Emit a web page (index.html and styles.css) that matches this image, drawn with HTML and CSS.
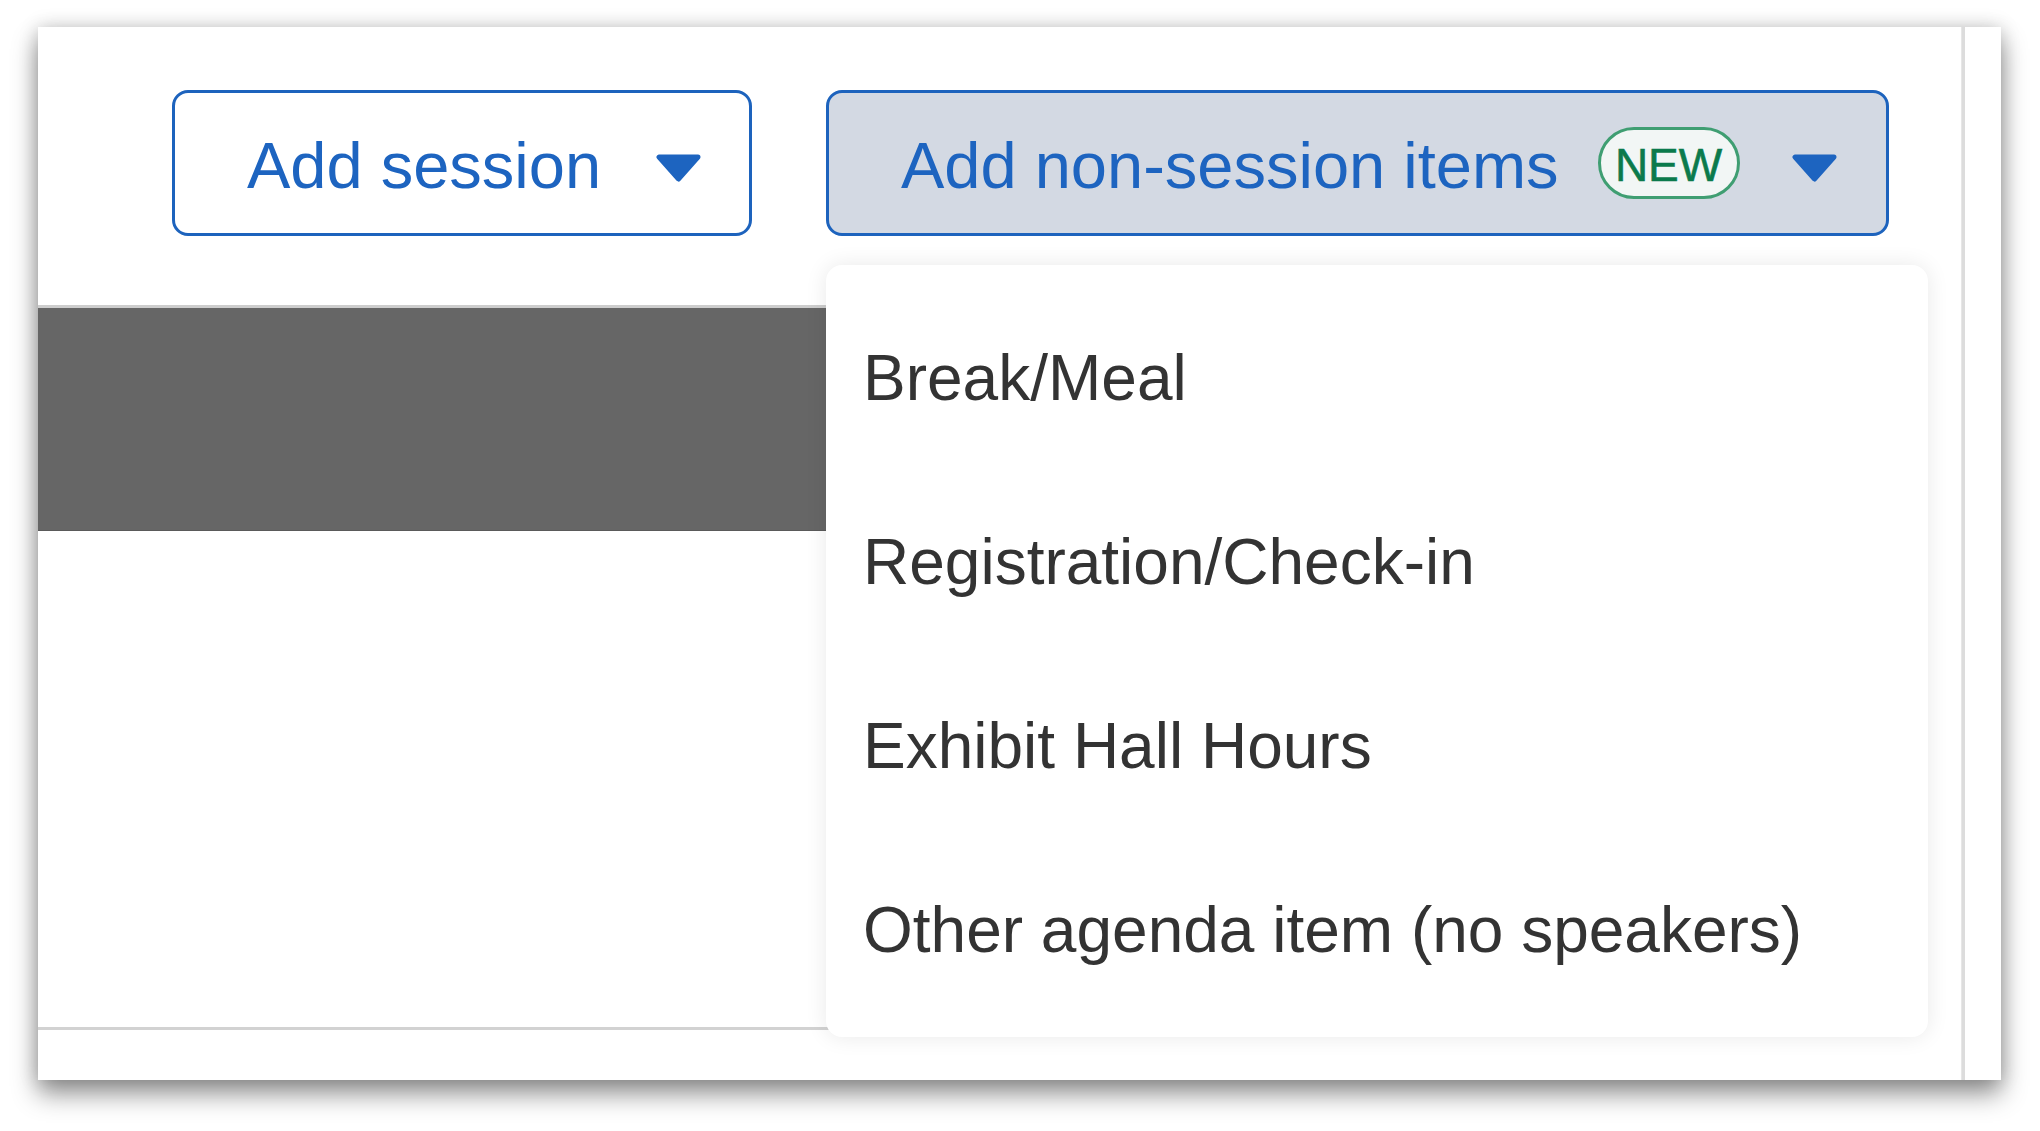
FILE: index.html
```html
<!DOCTYPE html>
<html lang="en">
<head>
<meta charset="utf-8">
<title>Agenda</title>
<link rel="stylesheet" href="styles.css">
</head>
<body>
<div class="window">
  <div class="main">
    <div class="toolbar">
      <button class="btn btn-outline">
        <span class="btn-label">Add session</span>
        <svg class="caret caret-1" width="47" height="28" viewBox="0 0 47 28"><path d="M4 3 L43 3 L23.5 25 Z" fill="#1d64c0" stroke="#1d64c0" stroke-width="5" stroke-linejoin="round"/></svg>
      </button>
      <button class="btn btn-filled">
        <span class="btn-label">Add non-session items</span>
        <span class="badge">NEW</span>
        <svg class="caret caret-2" width="47" height="28" viewBox="0 0 47 28"><path d="M4 3 L43 3 L23.5 25 Z" fill="#1d64c0" stroke="#1d64c0" stroke-width="5" stroke-linejoin="round"/></svg>
      </button>
    </div>
    <div class="band"></div>
    <div class="spacer"></div>
    <div class="rule"></div>
    <div class="footer"></div>

    <ul class="menu">
      <li class="menu-item">Break/Meal</li>
      <li class="menu-item">Registration/Check-in</li>
      <li class="menu-item">Exhibit Hall Hours</li>
      <li class="menu-item">Other agenda item (no speakers)</li>
    </ul>
  </div>
  <div class="divider"></div>
  <div class="side"></div>
</div>
</body>
</html>
```
FILE: styles.css
```css
* { box-sizing: border-box; }

html, body {
  margin: 0;
  padding: 0;
  background: #ffffff;
  font-family: "Liberation Sans", Arial, Helvetica, sans-serif;
}

body {
  width: 2040px;
  height: 1131px;
  overflow: hidden;
  padding: 27px 0 0 38px;
}

.window {
  width: 1963px;
  height: 1053px;
  background: #ffffff;
  display: flex;
  box-shadow: 0 14px 24px rgba(0, 0, 0, 0.42), 0 0 18px rgba(0, 0, 0, 0.18);
}

.main {
  position: relative;
  width: 1923px;
  display: flex;
  flex-direction: column;
}

.toolbar {
  height: 278px;
  display: flex;
  align-items: flex-start;
  padding: 63px 0 0 134px;
  gap: 74px;
}

.btn {
  height: 146px;
  border: 3.5px solid #1d63bd;
  border-radius: 16px;
  display: flex;
  align-items: center;
  font-family: inherit;
  font-size: 65px;
  color: #1d64c0;
  padding: 0 0 0 72px;
  margin: 0;
  cursor: pointer;
}

.btn-outline {
  width: 580px;
  background: #ffffff;
}

.btn-filled {
  width: 1063px;
  background: #d3d9e3;
}

.btn-label {
  line-height: 1;
  padding-top: 4px;
  white-space: nowrap;
}

.caret { flex: none; display: block; margin-top: 10px; }
.caret-1 { margin-left: 54px; }
.caret-2 { margin-left: 51px; }

.badge {
  margin-left: 39px;
  width: 142px;
  height: 72px;
  border: 3.5px solid #3f9e72;
  border-radius: 36px;
  background: #f2f6f5;
  color: #0b7a4c;
  font-size: 46px;
  line-height: 1;
  display: flex;
  align-items: center;
  justify-content: center;
  padding-top: 3px;
  flex: none;
  -webkit-text-stroke: 0.6px #0b7a4c;
}

.band {
  width: 830px;
  height: 226px;
  border-top: 3px solid #cdcdcd;
  border-bottom: 1px solid #5a5a5a;
  background: #666666;
}

.spacer { flex: 1; }

.rule {
  width: 830px;
  height: 3px;
  background: #d2d2d2;
}

.footer { height: 50px; }

.menu {
  position: absolute;
  left: 788px;
  top: 238px;
  width: 1102px;
  height: 772px;
  margin: 0;
  padding: 19px 0 17px;
  list-style: none;
  background: #ffffff;
  border-radius: 16px;
  box-shadow: 0 0 22px rgba(0, 0, 0, 0.09);
}

.menu-item {
  height: 184px;
  display: flex;
  align-items: center;
  padding: 4px 0 0 37px;
  font-size: 64px;
  color: #333333;
  white-space: nowrap;
}

.divider {
  width: 4px;
  background: #dcdcdc;
  border-left: 1px solid #e6e6e6;
}

.side {
  flex: 1;
}
```
